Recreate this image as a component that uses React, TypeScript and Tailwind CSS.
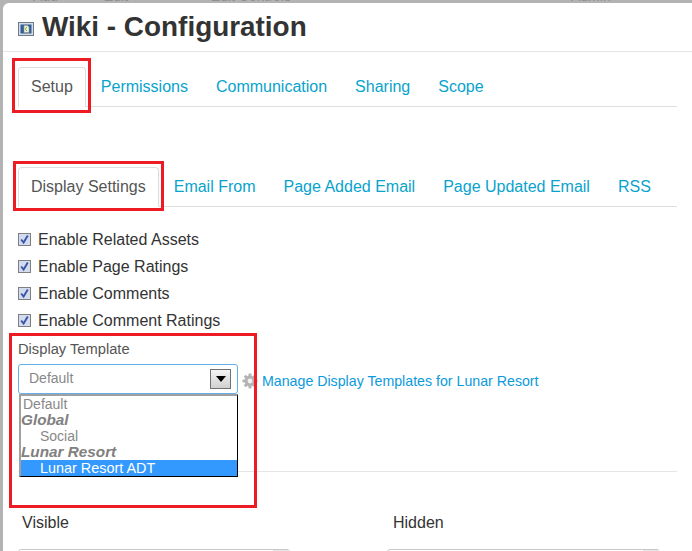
import React from "react";

const sans = "font-['Liberation_Sans',Arial,sans-serif]";

function RedBox({ className }: { className: string }) {
  return <div className={`absolute border-[3px] border-[#ed1c24] pointer-events-none ${className}`} />;
}

function Tabs({ items, active, mb }: { items: string[]; active: string; mb: string }) {
  return (
    <div className={`flex h-[40px] border-b border-[#dddddd] ${mb}`}>
      {items.map((t) =>
        t === active ? (
          <div key={t} className="h-[40px] px-[12px] flex items-center rounded-t-[4px] border border-[#dddddd] border-b-white text-[#555555] bg-white mr-[1px]">
            {t}
          </div>
        ) : (
          <div key={t} className="h-[39px] px-[14px] flex items-center text-[#09a3cc]">
            {t}
          </div>
        )
      )}
    </div>
  );
}

function Check({ label }: { label: string }) {
  return (
    <div className="flex items-center h-[27px] text-[16px] text-[#333333]">
      <span className="w-[13px] h-[13px] border border-[#7f7f7f] bg-[#d3dbef] flex items-center justify-center mr-[7px]">
        <svg width="11" height="11" viewBox="0 0 11 11">
          <path d="M2.2 5.5 L4.6 8.6 L8.8 1.6" fill="none" stroke="#3a55a5" strokeWidth="1.9" />
        </svg>
      </span>
      {label}
    </div>
  );
}

function Gear() {
  return (
    <svg width="16" height="16" viewBox="0 0 16 16" className="mr-[4px]">
      <g fill="#b4b4b4">
        {[0, 45, 90, 135].map((a) => (
          <rect key={a} x="6.5" y="0.5" width="3" height="15" rx="0.8" transform={`rotate(${a} 8 8)`} />
        ))}
        <circle cx="8" cy="8" r="5.4" />
      </g>
      <circle cx="8" cy="8" r="2.4" fill="#f1f1f1" />
    </svg>
  );
}

export default function App() {
  return (
    <div className={`relative w-[692px] h-[551px] overflow-hidden bg-[#b3b3b3] ${sans}`}>
      <div className="absolute left-0 -top-[13px] w-full text-[14px] leading-[18px] text-[#8f8f8f] whitespace-nowrap flex">
        <span className="ml-[33px]">Add ▾</span>
        <span className="ml-[35px]">Edit ▾</span>
        <span className="ml-[72px]">Edit Controls</span>
        <span className="ml-[280px]">Admin ▾</span>
      </div>
      <div className="absolute left-[3px] top-[3px] w-[689px] h-[560px] bg-white rounded-tl-[6px] px-[15px]">
        <div className="-mx-[15px] px-[15px] h-[49px] border-b border-[#e5e5e5] flex items-center">
          <svg width="16" height="14" viewBox="0 0 16 14" className="mr-[8px] mt-[3px]">
            <rect x="0.5" y="0.5" width="15" height="13" fill="#d6dbe4" stroke="#6f7a8c" />
            <rect x="2.5" y="2.5" width="11" height="9" fill="#2f5f9e" />
            <path d="M6 3.5h3.5L11 5v5.5H6z" fill="#f2f0d8" stroke="#9a9a70" strokeWidth="0.6" />
            <path d="M8.5 5 7.5 7.5 9 9" fill="none" stroke="#55a04a" strokeWidth="0.9" />
          </svg>
          <h1 className="text-[27.9px] leading-[30px] font-bold text-[#333333]">Wiki - Configuration</h1>
        </div>
        <div className="h-[15px]" />
        <div className="text-[16px]">
          <Tabs items={["Setup", "Permissions", "Communication", "Sharing", "Scope"]} active="Setup" mb="mb-[60px]" />
          <Tabs items={["Display Settings", "Email From", "Page Added Email", "Page Updated Email", "RSS"]} active="Display Settings" mb="mb-[19px]" />
        </div>
        <Check label="Enable Related Assets" />
        <Check label="Enable Page Ratings" />
        <Check label="Enable Comments" />
        <Check label="Enable Comment Ratings" />
        <div className="text-[14.7px] leading-[20px] text-[#555555] mt-[5px] mb-[5px]">Display Template</div>
        <div className="flex items-center h-[30px]">
          <div className="relative w-[220px] h-[30px] rounded-[3px] border border-[#66afe9] bg-white flex items-center pl-[10px] pb-[2px] text-[14px] text-[#888888]">
            Default
            <span className="absolute right-[6px] top-[4px] w-[21px] h-[20px] border border-[#707070] bg-gradient-to-b from-[#f4f4f4] to-[#d0d0d0] flex items-center justify-center">
              <span className="w-0 h-0 border-x-[5px] border-x-transparent border-t-[6px] border-t-black" />
            </span>
          </div>
          <div className="ml-[4px] mt-[5px] flex items-center text-[14.2px] text-[#0b9adc]">
            <Gear />
            Manage Display Templates for Lunar Resort
          </div>
        </div>
        <div className="mt-[77px] border-t border-[#e5e5e5]" />
        <div className="flex mt-[39px] text-[16px] text-[#333333]">
          <div className="w-[375px]">
            <span className="pl-[4px]">Visible</span>
            <div className="mt-[14px] w-[272px] h-[20px] rounded-t-[3px] border border-[#c8c8c8] flex justify-end">
              <span className="w-[16px] bg-[#e6e6e6]" />
            </div>
          </div>
          <div>
            <span>Hidden</span>
            <div className="mt-[14px] -ml-[6px] w-[273px] h-[20px] rounded-t-[3px] border border-[#c8c8c8] flex justify-end">
              <span className="w-[16px] bg-[#e6e6e6]" />
            </div>
          </div>
        </div>
      </div>

      {/* open select list */}
      <div className="absolute left-[19px] top-[394px] w-[219px] h-[83px] bg-white border-l-2 border-t-2 border-l-[#a0a0a0] border-t-[#a0a0a0] border-r border-b border-r-black border-b-black text-[14px] leading-[16px] text-[#888888]">
        <div className="pl-[2px]">Default</div>
        <div className="font-bold italic text-[15.3px] text-[#808080]">Global</div>
        <div className="pl-[19px]">Social</div>
        <div className="font-bold italic text-[15.3px] text-[#808080]">Lunar Resort</div>
        <div className="pl-[19px] text-[14.4px] bg-[#3399ff] text-white">Lunar Resort ADT</div>
      </div>

      <RedBox className="left-[12px] top-[58px] w-[79px] h-[55px]" />
      <RedBox className="left-[13px] top-[161px] w-[151px] h-[50px]" />
      <RedBox className="left-[9px] top-[333px] w-[248px] h-[175px]" />
    </div>
  );
}
